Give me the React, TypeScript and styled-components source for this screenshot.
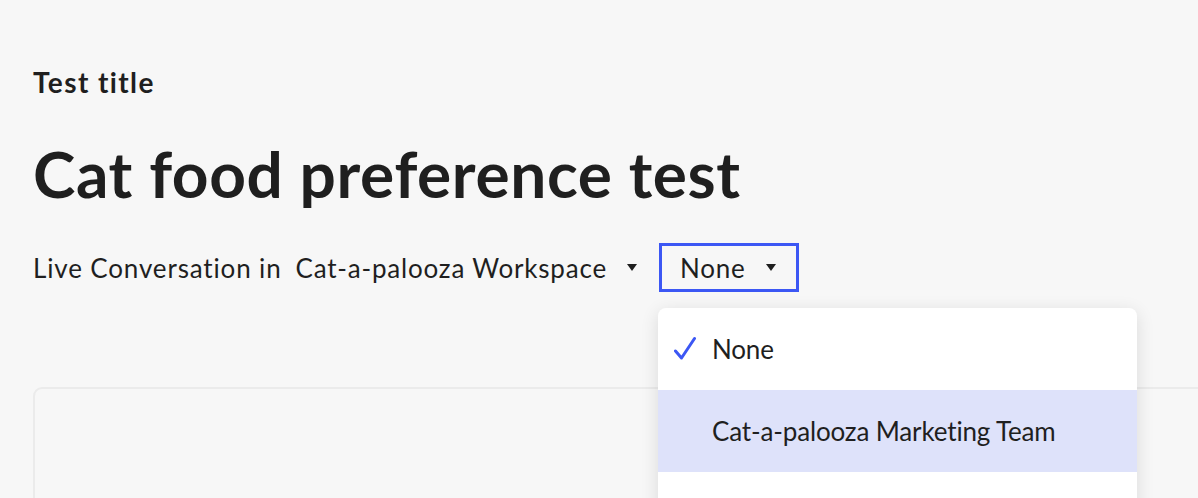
import React from "react";
import styled, { createGlobalStyle } from "styled-components";

const Global = createGlobalStyle`
  html, body { margin: 0; padding: 0; background: #f7f7f7; }
  body { font-family: "Lato", "Noto Sans", sans-serif; color: #1f1f1f; overflow: hidden; }
`;

const Page = styled.div`
  padding: 62px 0 0 33px;
  height: 498px;
  box-sizing: border-box;
  overflow: hidden;
`;

const Label = styled.div`
  font-size: 28px;
  font-weight: 700;
  line-height: 40px;
  letter-spacing: 1.4px;
  color: #1f1f1f;
`;

const Heading = styled.h1`
  margin: 34px 0 0 0;
  font-size: 64px;
  font-weight: 700;
  line-height: 76px;
  letter-spacing: 0.6px;
  color: #1f1f1f;
`;

const Row = styled.div`
  display: flex;
  align-items: center;
  margin-top: 31px;
  font-size: 26px;
  height: 49px;
`;

const Plain = styled.span`
  margin-right: 14px;
  letter-spacing: 0.85px;
`;

const Select = styled.div<{ $focused?: boolean }>`
  position: relative;
  display: flex;
  align-items: center;
  height: 49px;
  box-sizing: border-box;
  padding: 0 ${(p) => (p.$focused ? "20px" : "22px")} 0 ${(p) => (p.$focused ? "18px" : "0")};
  border: 3px solid ${(p) => (p.$focused ? "#3c57f4" : "transparent")};
  border-width: ${(p) => (p.$focused ? "3px" : "0")};
  letter-spacing: 0.8px;
`;

const Caret = styled.span`
  display: inline-block;
  width: 0;
  height: 0;
  border-left: 5.5px solid transparent;
  border-right: 5.5px solid transparent;
  border-top: 7px solid #1f1f1f;
  margin-left: 20px;
`;

const Menu = styled.div`
  position: absolute;
  top: 62px;
  left: -4px;
  width: 479px;
  background: #ffffff;
  border-radius: 8px;
  box-shadow: 0 4px 18px rgba(0, 0, 0, 0.12);
  z-index: 10;
  overflow: hidden;
  height: 260px;
`;

const Item = styled.div<{ $highlight?: boolean }>`
  display: flex;
  align-items: center;
  height: 82px;
  padding-left: 54px;
  position: relative;
  background: ${(p) => (p.$highlight ? "#dee2fa" : "transparent")};
  font-size: 26px;
  color: #1f1f1f;
  letter-spacing: -0.15px;
  white-space: nowrap;
`;

const Check = styled.svg`
  position: absolute;
  left: 15px;
  top: 28px;
`;

const Card = styled.div`
  margin-top: 95px;
  margin-right: -20px;
  height: 200px;
  border: 2px solid #ebebeb;
  border-radius: 9px;
  background: #f7f7f7;
`;

export default function App() {
  return (
    <>
      <Global />
      <Page>
        <Label>Test title</Label>
        <Heading>Cat food preference test</Heading>
        <Row>
          <Plain>Live Conversation in</Plain>
          <Select>
            Cat-a-palooza Workspace
            <Caret />
          </Select>
          <Select $focused>
            None
            <Caret />
            <Menu>
              <Item>
                <Check width="24" height="24" viewBox="0 0 24 24">
                  <path d="M2.5 15 L8.5 22 L21.5 2.5" fill="none" stroke="#3c57f4" strokeWidth="3" strokeLinecap="round" strokeLinejoin="round" />
                </Check>
                None
              </Item>
              <Item $highlight>Cat-a-palooza Marketing Team</Item>
              <Item />
            </Menu>
          </Select>
        </Row>
        <Card />
      </Page>
    </>
  );
}
